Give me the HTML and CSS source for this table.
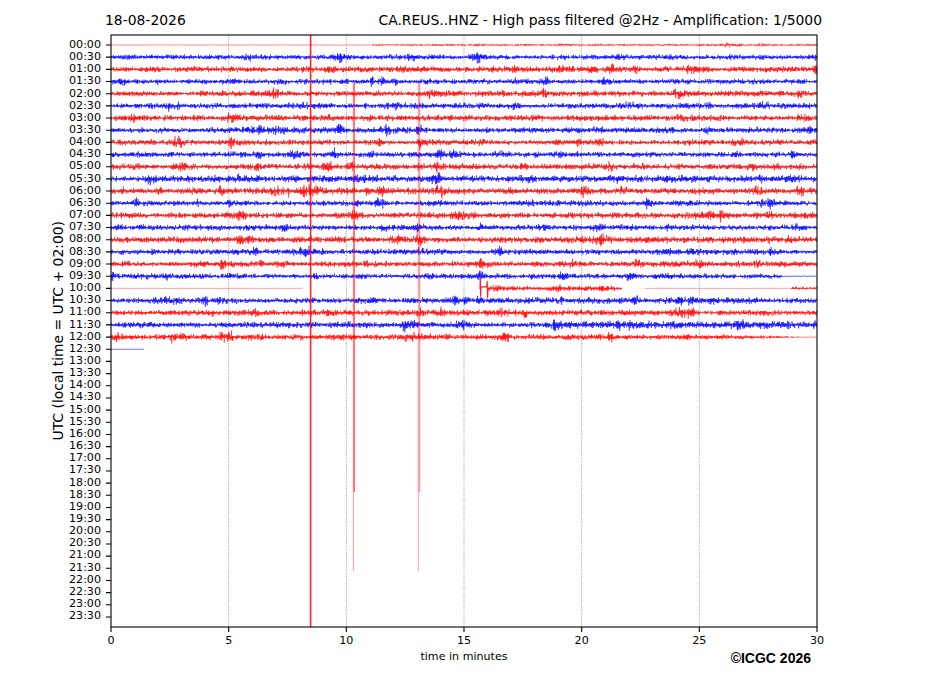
FILE: index.html
```html
<!DOCTYPE html>
<html lang="en">
<head>
<meta charset="utf-8">
<title>CA.REUS..HNZ helicorder</title>
<link rel="stylesheet" href="styles.css">
</head>
<body>
<div class="figure">
  <header class="titles">
    <span class="title-left">18-08-2026</span>
    <span class="title-right">CA.REUS..HNZ - High pass filtered @2Hz - Amplification: 1/5000</span>
  </header>
  <div class="plot-row">
    <div class="ylabel-col"><span class="ylabel">UTC (local time = UTC + 02:00)</span></div>
    <div class="yticks">
      <span>00:00</span><span>00:30</span><span>01:00</span><span>01:30</span><span>02:00</span><span>02:30</span>
      <span>03:00</span><span>03:30</span><span>04:00</span><span>04:30</span><span>05:00</span><span>05:30</span>
      <span>06:00</span><span>06:30</span><span>07:00</span><span>07:30</span><span>08:00</span><span>08:30</span>
      <span>09:00</span><span>09:30</span><span>10:00</span><span>10:30</span><span>11:00</span><span>11:30</span>
      <span>12:00</span><span>12:30</span><span>13:00</span><span>13:30</span><span>14:00</span><span>14:30</span>
      <span>15:00</span><span>15:30</span><span>16:00</span><span>16:30</span><span>17:00</span><span>17:30</span>
      <span>18:00</span><span>18:30</span><span>19:00</span><span>19:30</span><span>20:00</span><span>20:30</span>
      <span>21:00</span><span>21:30</span><span>22:00</span><span>22:30</span><span>23:00</span><span>23:30</span>
    </div>
    <svg class="plot" width="826" height="620" viewBox="101 29 826 620" xmlns="http://www.w3.org/2000/svg">
      <defs>
        <clipPath id="axclip"><rect x="111" y="35" width="706" height="592"/></clipPath>
      </defs>
      <g class="grid">
        <path d="M228.67 35V627M346.33 35V627M464 35V627M581.67 35V627M699.33 35V627"/>
      </g>
      <g id="traces" clip-path="url(#axclip)"></g>
      <g class="spikes" clip-path="url(#axclip)">
        <path class="sp-main" d="M310.6 35V627"/>
        <path class="sp-a" d="M353.3 83V571"/>
        <path class="sp-b" d="M354.2 83V492"/>
        <path class="sp-c" d="M418.3 83V571"/>
        <path class="sp-d" d="M419.6 83V492"/>
        <path class="sp-e" d="M437.3 150V190"/>
      </g>
      <path class="ticks" d="M106 45H111M106 57.17H111M106 69.34H111M106 81.51H111M106 93.68H111M106 105.85H111M106 118.02H111M106 130.19H111M106 142.36H111M106 154.53H111M106 166.7H111M106 178.87H111M106 191.04H111M106 203.21H111M106 215.38H111M106 227.55H111M106 239.72H111M106 251.89H111M106 264.06H111M106 276.23H111M106 288.4H111M106 300.57H111M106 312.74H111M106 324.91H111M106 337.08H111M106 349.25H111M106 361.42H111M106 373.59H111M106 385.76H111M106 397.93H111M106 410.1H111M106 422.27H111M106 434.44H111M106 446.61H111M106 458.78H111M106 470.95H111M106 483.12H111M106 495.29H111M106 507.46H111M106 519.63H111M106 531.8H111M106 543.97H111M106 556.14H111M106 568.31H111M106 580.48H111M106 592.65H111M106 604.82H111M106 616.99H111M111 627V632M228.67 627V632M346.33 627V632M464 627V632M581.67 627V632M699.33 627V632M817 627V632"/>
      <rect class="frame" x="111" y="35" width="706" height="592"/>
      <g class="xticks">
        <text x="111" y="644">0</text>
        <text x="228.67" y="644">5</text>
        <text x="346.33" y="644">10</text>
        <text x="464" y="644">15</text>
        <text x="581.67" y="644">20</text>
        <text x="699.33" y="644">25</text>
        <text x="817" y="644">30</text>
      </g>
    </svg>
  </div>
  <footer class="xfoot">
    <span class="xlabel">time in minutes</span>
    <span class="credit">©ICGC 2026</span>
  </footer>
</div>
<script src="script.js"></script>
</body>
</html>
```

FILE: styles.css
```css
html, body {
  margin: 0;
  padding: 0;
  background: #ffffff;
}
body {
  font-family: "DejaVu Sans", "Noto Sans", sans-serif;
  color: #000000;
}
.figure {
  width: 927px;
  height: 696px;
  overflow: hidden;
}
.titles {
  display: flex;
  justify-content: space-between;
  padding: 12px 105px 0 105px;
  height: 17px;
  font-size: 13.9px;
  line-height: 17px;
  white-space: nowrap;
}
.plot-row {
  display: flex;
  height: 620px;
}
.ylabel-col {
  flex: none;
  width: 16px;
  padding: 6px 0.5px 22px 49.5px;
  display: flex;
  align-items: center;
  justify-content: center;
}
.ylabel {
  writing-mode: vertical-rl;
  transform: rotate(180deg);
  font-size: 13.9px;
  line-height: 16px;
  white-space: nowrap;
}
.yticks {
  flex: none;
  width: 35px;
  padding-top: 9.915px;
  display: flex;
  flex-direction: column;
  font-size: 11.1px;
}
.yticks span {
  height: 12.17px;
  line-height: 12.17px;
  text-align: right;
  white-space: nowrap;
}
.plot {
  display: block;
  flex: none;
}
.grid path {
  fill: none;
  stroke: #555555;
  stroke-width: 0.7;
  stroke-dasharray: 0.8 1.4;
}
.spikes path {
  fill: none;
  stroke: #ff0000;
}
.sp-main { stroke-width: 1.6; opacity: 0.85; }
.sp-a { stroke-width: 0.8; opacity: 0.5; }
.sp-b { stroke-width: 1.2; opacity: 0.7; }
.sp-c { stroke-width: 0.9; opacity: 0.45; }
.sp-d { stroke-width: 1.4; opacity: 0.4; }
.sp-e { stroke-width: 0.6; opacity: 0.4; stroke: #0000ff; }
.ticks {
  fill: none;
  stroke: #000000;
  stroke-width: 1.1;
}
.frame {
  fill: none;
  stroke: #000000;
  stroke-width: 1.1;
}
.xticks text {
  font-family: "DejaVu Sans", sans-serif;
  font-size: 11.1px;
  text-anchor: middle;
  fill: #000000;
}
.xfoot {
  display: grid;
  grid-template-columns: 111px 706px;
  align-items: start;
  padding-top: 1px;
}
.xlabel, .credit {
  grid-row: 1;
  grid-column: 2;
}
.xlabel {
  justify-self: center;
  font-size: 11.1px;
  line-height: 13px;
}
.credit {
  justify-self: end;
  margin-right: 6px;
  font-family: "Liberation Sans", Arial, sans-serif;
  font-weight: bold;
  font-size: 14px;
  line-height: 16px;
}
```

FILE: script.js
```js
(function () {
  var NS = 'http://www.w3.org/2000/svg';
  var layer = document.getElementById('traces');
  var seed = 20260818;
  function rnd() {
    seed = (seed + 0x6D2B79F5) | 0;
    var t = seed;
    t = Math.imul(t ^ (t >>> 15), t | 1);
    t ^= t + Math.imul(t ^ (t >>> 7), t | 61);
    return ((t ^ (t >>> 14)) >>> 0) / 4294967296;
  }
  function gauss() {
    var u = rnd() || 1e-9, v = rnd();
    return Math.sqrt(-2 * Math.log(u)) * Math.cos(2 * Math.PI * v);
  }
  var X0 = 111, X1 = 817, Y0 = 45, DY = 12.17;
  var RED = '#ff0000', BLUE = '#0000ff';
  var GAIN = 1.25, CAP = 3.0;

  function add(d, color, w, op) {
    var p = document.createElementNS(NS, 'path');
    p.setAttribute('d', d);
    p.setAttribute('fill', 'none');
    p.setAttribute('stroke', color);
    p.setAttribute('stroke-width', w);
    p.setAttribute('stroke-linejoin', 'round');
    if (op !== undefined) p.setAttribute('opacity', op);
    layer.appendChild(p);
  }

  function makeEnv(base, bursts, xa, xb, mod, extra) {
    var pts = [];
    var start = xa - 40;
    for (var x = start; x <= xb + 60; x += 18) pts.push(0.8 + rnd() * 0.45);
    var bs = bursts.slice();
    var n = extra === undefined ? 6 + Math.floor(rnd() * 6) : extra;
    for (var k = 0; k < n; k++) bs.push([xa + rnd() * (xb - xa), 1 + rnd() * 4, 0.3 + rnd() * 0.9]);
    return function (x) {
      var f = (x - start) / 18, i = Math.floor(f), t = f - i;
      var s = pts[i] * (1 - t) + pts[Math.min(i + 1, pts.length - 1)] * t;
      var b = 1;
      for (var j = 0; j < bs.length; j++) {
        var z = (x - bs[j][0]) / bs[j][1];
        if (z > -4 && z < 4) b += bs[j][2] * Math.exp(-z * z);
      }
      var m = mod ? mod(x) : 1;
      return Math.min(CAP, GAIN * base * s * b * m);
    };
  }

  // dense alternating trace: each sample swings across the baseline,
  // which fills the band like a densely sampled seismogram
  function trace(yc, xa, xb, env, step) {
    var d = [];
    var sgn = 1;
    for (var x = xa; x <= xb; x += step) {
      var g = Math.abs(gauss());
      if (g > 2.4) g = 2.4;
      sgn = -sgn;
      d.push((d.length ? 'L' : 'M') + x.toFixed(2) + ' ' + (yc + sgn * env(x) * g).toFixed(2));
    }
    return d.join('');
  }
  function flat(a) { return function () { return a; }; }

  function row(i) { return Y0 + i * DY; }
  function col(i) { return i % 2 === 0 ? RED : BLUE; }

  var rows = {
    1: { b: 0.85, k: [[250, 6, 1], [478, 6, 1.2], [475, 3, 0.8]] },
    2: { b: 0.95, k: [[330, 4, 1.2], [690, 8, 0.8], [560, 10, 0.5]] },
    3: { b: 0.85, k: [[372, 1.5, 2.5], [545, 3, 1.8], [605, 5, 0.8], [230, 6, 0.8]] },
    4: { b: 0.95, k: [[545, 2, 2], [678, 4, 1.2], [430, 6, 0.8]] },
    5: { b: 0.9, k: [[170, 15, 0.6], [630, 6, 1.2], [765, 3, 1.2], [300, 10, 0.4]] },
    6: { b: 1.0, k: [[133, 2, 2.2], [232, 8, 0.8], [330, 6, 0.6], [680, 6, 0.6]] },
    7: { b: 0.95, k: [[270, 22, 0.8], [420, 4, 1.6], [600, 8, 0.5], [810, 5, 0.8]] },
    8: { b: 0.95, k: [[150, 6, 0.8], [232, 3, 1.6], [420, 4, 1.6], [740, 6, 1]] },
    9: { b: 0.9, k: [[335, 3, 2], [440, 5, 1], [500, 8, 0.8], [560, 6, 0.6]] },
    10: { b: 0.95, k: [[180, 8, 1], [330, 6, 0.8], [436, 2, 2.2], [420, 3, 1.6], [610, 6, 0.8]] },
    11: { b: 1.1, k: [[150, 4, 1.2], [437, 3, 1.6], [680, 10, 0.4], [790, 8, 0.5]] },
    12: { b: 1.05, k: [[310, 12, 0.9], [382, 3, 2], [585, 3, 2], [800, 3, 1.6], [440, 4, 1.2]] },
    13: { b: 0.95, k: [[137, 2, 2.4], [230, 3, 1.2], [380, 5, 1.2], [770, 3, 1.6], [650, 5, 0.8]] },
    14: { b: 1.0, k: [[240, 3, 2], [355, 4, 1.2], [706, 14, 0.9], [470, 6, 0.5]] },
    15: { b: 0.95, k: [[285, 2, 2.6], [418, 4, 1.2], [600, 6, 0.6]] },
    16: { b: 1.05, k: [[400, 3, 1.6], [420, 3, 2], [240, 8, 0.6], [600, 10, 0.5]] },
    17: { b: 0.9, k: [[500, 2, 2.6], [420, 4, 1.2], [300, 6, 0.6]] },
    18: { b: 0.95, k: [[222, 3, 2], [480, 6, 1.2], [637, 4, 1.2]] },
    21: { b: 0.95, k: [[205, 2, 2.6], [170, 12, 0.5], [480, 3, 1.6], [635, 3, 1.6]] },
    22: { b: 0.95, k: [[440, 4, 1], [680, 8, 1], [500, 6, 0.5]] },
    23: { b: 1.0, k: [[405, 3, 2], [460, 6, 1], [740, 3, 1.6], [815, 2, 2.4], [560, 5, 0.8]],
          mod: function (x) { return x > 600 ? 1.3 : 1 + (x > 540 ? (x - 540) / 60 * 0.3 : 0); } },
    24: { b: 1.0, k: [[173, 3, 2], [229, 4, 1.2], [505, 4, 1.6], [410, 6, 0.6]],
          mod: function (x) { return x < 730 ? 1 : Math.max(0.1, 1 - (x - 730) / 80); } }
  };

  var STEP = 0.25, W = 0.5;
  for (var i = 1; i <= 24; i++) {
    var r = rows[i];
    if (!r) continue;
    var env = makeEnv(r.b, r.k, X0, X1, r.mod);
    add(trace(row(i), X0, X1, env, STEP), col(i), W);
  }

  // 00:00 row: quiet start, then low noise
  var y0 = row(0);
  add(trace(y0, X0, 372, flat(0.1), 2), RED, 0.9, 0.5);
  var e0 = makeEnv(0.35, [[728, 4, 2.2], [480, 8, 0.6], [560, 10, 0.5]], 372, X1, null, 4);
  add(trace(y0, 372, X1, e0, STEP), RED, 0.45, 0.9);

  // 09:30 row: signal until ~780, then quiet
  var y19 = row(19);
  var e19 = makeEnv(0.9, [[480, 2, 2.4], [113, 2, 1.6], [560, 5, 0.8]], X0, 782);
  add(trace(y19, X0, 782, e19, STEP), BLUE, W);
  add(trace(y19, 782, X1, flat(0.15), 1.5), BLUE, 0.8, 0.8);

  // 10:00 row: gaps and a step event
  var y20 = row(20);
  add(trace(y20, X0, 305, flat(0.08), 3), RED, 1.1, 0.3);
  add('M480 ' + (y20 + 0.5) + 'L480.3 ' + (y20 - 12) + 'L480.6 ' + (y20 + 8) + 'L481 ' + (y20 - 1.5) +
      'L486.6 ' + (y20 - 1.5) + 'L487.2 ' + (y20 - 7) + 'L487.6 ' + (y20 + 9) + 'L488.2 ' + (y20 - 1), RED, 1.1, 0.9);
  var e20 = makeEnv(0.85, [[495, 4, 0.6], [600, 8, 0.4]], 488, 622,
    function (x) { return x > 612 ? Math.max(0.35, 1 - (x - 612) / 14) : 1; }, 3);
  add(trace(y20, 488, 622, e20, STEP), RED, W);
  add(trace(y20, 645, 790, flat(0.08), 3), RED, 1.1, 0.3);
  var e20b = makeEnv(0.45, [], 790, X1, null, 1);
  add(trace(y20, 790, X1, e20b, STEP), RED, 0.5, 0.9);

  // 12:30 row: short quiet stub
  var y25 = row(25);
  add(trace(y25, X0, 146, flat(0.05), 3), BLUE, 0.9, 0.6);
})();
```
